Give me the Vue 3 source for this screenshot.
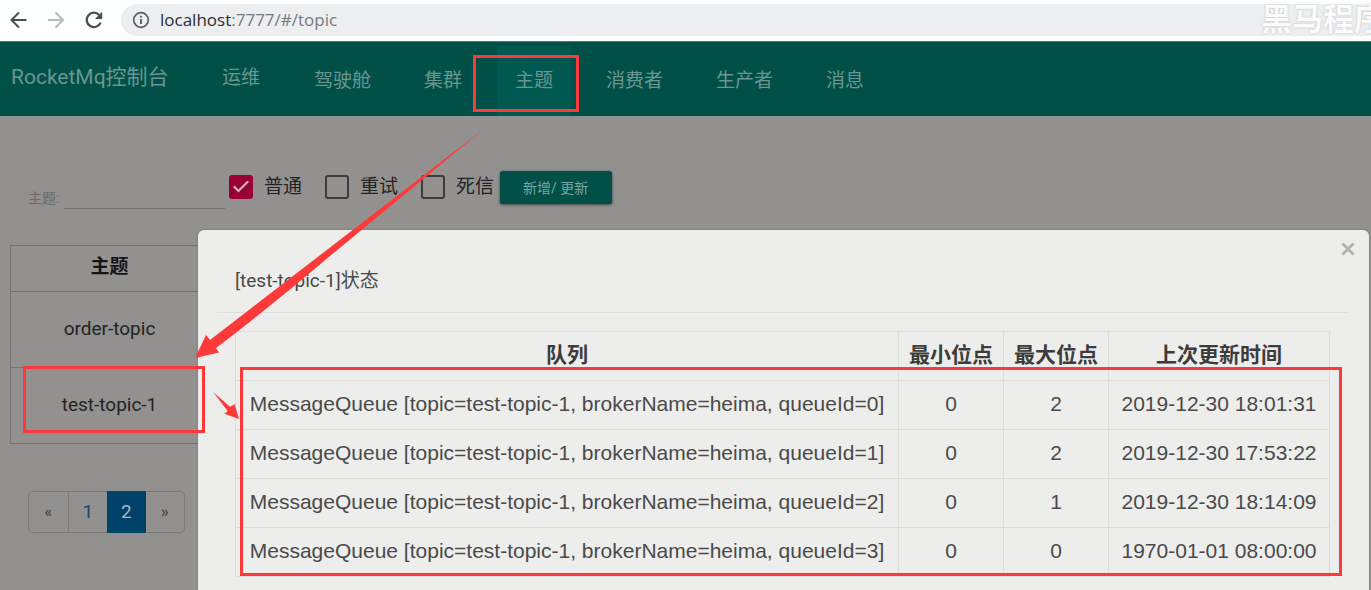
<script setup>
import { ref } from 'vue'

const navItems = ['驾驶舱', '集群', '主题', '消费者', '生产者', '消息']
const activeNav = ref('主题')

const keyword = ref('')
const filters = ref([
  { id: 'normal', label: '普通', checked: true },
  { id: 'retry', label: '重试', checked: false },
  { id: 'dead', label: '死信', checked: false },
])

const topics = ['order-topic', 'test-topic-1']
const pages = ['«', '1', '2', '»']
const currentPage = ref('2')

const queues = [
  { id: 0, min: 0, max: 2, updated: '2019-12-30 18:01:31' },
  { id: 1, min: 0, max: 2, updated: '2019-12-30 17:53:22' },
  { id: 2, min: 0, max: 1, updated: '2019-12-30 18:14:09' },
  { id: 3, min: 0, max: 0, updated: '1970-01-01 08:00:00' },
]
</script>

<template>
  <div class="page">
    <div class="browser">
      <button class="tool" aria-label="后退">
        <svg width="20" height="20" viewBox="0 0 20 20" fill="none" stroke="#4c4e50" stroke-width="2">
          <path d="M18.500 10H4M11 2.500L3.500 10l7.500 7.500" />
        </svg>
      </button>
      <button class="tool" aria-label="前进">
        <svg width="20" height="20" viewBox="0 0 20 20" fill="none" stroke="#b9babb" stroke-width="2">
          <path d="M2 10h15M9.500 2.500L17 10l-7.500 7.500" />
        </svg>
      </button>
      <button class="tool" aria-label="刷新">
        <svg width="20" height="20" viewBox="0 0 20 20">
          <path d="M16.600 12.600A7.200 7.200 0 1 1 15.400 5.200" fill="none" stroke="#4c4e50" stroke-width="2.300" />
          <path d="M18.200 1.800V9H11z" fill="#4c4e50" />
        </svg>
      </button>
      <div class="address">
        <svg width="18" height="18" viewBox="0 0 18 18" aria-hidden="true">
          <circle cx="9" cy="9" r="7.300" fill="none" stroke="#5b5d60" stroke-width="1.700" />
          <path d="M9 8v5M9 4.700v1.800" stroke="#5b5d60" stroke-width="1.900" />
        </svg>
        <span class="url"><span class="host">localhost</span>:7777/#/topic</span>
      </div>
      <div class="watermark">黑马程序</div>
    </div>

    <header class="navbar">
      <a class="brand" href="#">RocketMq控制台</a>
      <a class="ops" href="#">运维</a>
      <nav class="nav">
        <a
          v-for="item in navItems"
          :key="item"
          href="#"
          :class="{ active: item === activeNav }"
          @click.prevent="activeNav = item"
        >{{ item }}</a>
      </nav>
    </header>

    <main class="content">
      <form class="filters" @submit.prevent>
        <div class="field">
          <label for="keyword">主题:</label>
          <input id="keyword" v-model="keyword" type="text" />
        </div>
        <div class="checks">
          <label v-for="f in filters" :key="f.id" class="check" :for="f.id">
            <input :id="f.id" v-model="f.checked" type="checkbox" />
            <span>{{ f.label }}</span>
          </label>
        </div>
        <button class="update" type="button">新增/ 更新</button>
      </form>

      <table class="topics">
        <thead>
          <tr><th>主题</th><th></th></tr>
        </thead>
        <tbody>
          <tr v-for="t in topics" :key="t"><td>{{ t }}</td><td></td></tr>
        </tbody>
      </table>

      <div class="pager">
        <button
          v-for="p in pages"
          :key="p"
          type="button"
          :class="{ current: p === currentPage, arrow: p === '«' || p === '»' }"
        >{{ p }}</button>
      </div>
    </main>

    <section class="modal" role="dialog" aria-labelledby="modal-title">
      <button class="close" type="button" aria-label="关闭">
        <svg width="14" height="14" viewBox="0 0 14 14" stroke="#b0b0af" stroke-width="2.800">
          <path d="M1.500 1.500l11 11M12.500 1.500l-11 11" />
        </svg>
      </button>
      <h2 id="modal-title">[test-topic-1]状态</h2>
      <table class="queues">
        <colgroup>
          <col />
          <col class="offset" />
          <col class="offset" />
          <col class="time" />
        </colgroup>
        <thead>
          <tr><th>队列</th><th>最小位点</th><th>最大位点</th><th>上次更新时间</th></tr>
        </thead>
        <tbody>
          <tr v-for="q in queues" :key="q.id">
            <td>MessageQueue [topic=test-topic-1, brokerName=heima, queueId={{ q.id }}]</td>
            <td>{{ q.min }}</td>
            <td>{{ q.max }}</td>
            <td>{{ q.updated }}</td>
          </tr>
        </tbody>
      </table>
    </section>

    <svg class="marks" width="1371" height="590" viewBox="0 0 1371 590" aria-hidden="true">
      <g fill="none" stroke="#fd3a39" stroke-width="3">
        <rect x="474.500" y="56.500" width="103" height="54" />
        <rect x="24.500" y="367.500" width="179" height="64" />
        <rect x="241.500" y="368.500" width="1099" height="206" />
      </g>
      <g fill="#fd3a39">
        <path d="M485 128L210 340L206 335L195 358L219 352.500L216 348Q275 303 330 256Z" />
        <path d="M213 392L230 406.700L234.700 404.300L239 419L224.300 413.700L227.700 411Z" />
      </g>
    </svg>
  </div>
</template>

<style>
body {
  margin: 0;
  background: #929190;
}
</style>

<style scoped>
.page {
  position: relative;
  height: 100vh;
  overflow: hidden;
  background: #929190;
  color: #222;
  font-family: Roboto, "Noto Sans CJK SC", sans-serif;
  font-size: 19px;
}

.page * {
  box-sizing: border-box;
}

button {
  padding: 0;
  border: 0;
  background: none;
  font-family: inherit;
}

a {
  color: inherit;
  text-decoration: none;
}

/* Browser bar */
.browser {
  position: relative;
  display: flex;
  align-items: center;
  height: 41px;
  padding: 0 0 2px 8px;
  gap: 17px;
  background: #fdfefe;
}

.tool {
  display: flex;
  width: 20px;
  height: 20px;
}

.tool + .tool {
  margin-left: 1px;
}

.address {
  display: flex;
  flex: 1;
  align-items: center;
  gap: 10px;
  height: 32px;
  padding-left: 11px;
  border-radius: 16px 0 0 16px;
  background: #eceef0;
}

.url {
  color: #76797c;
  font-family: "Open Sans", sans-serif;
  font-size: 17px;
  line-height: 24px;
}

.host {
  color: #2b2d30;
}

.watermark {
  position: absolute;
  top: 0;
  right: 0;
  width: 110px;
  overflow: hidden;
  color: #fbfbfb;
  font-size: 31px;
  font-weight: 700;
  line-height: 40px;
  text-shadow: 0 0 2px #b8babc;
  white-space: nowrap;
}

/* Navigation */
.navbar {
  display: flex;
  align-items: flex-start;
  height: 75px;
  padding-left: 11px;
  border-top: 1px solid #2f8981;
  background: #005048;
  color: #6a9691;
  font-size: 19px;
}

.brand {
  width: 211px;
  font-size: 21px;
  line-height: 70px;
}

.ops {
  width: 74px;
  line-height: 72px;
}

.nav {
  display: flex;
  gap: 17px;
  padding-top: 4px;
}

.nav a {
  padding: 0 18px;
  border-radius: 3px 3px 0 0;
  line-height: 70px;
}

.nav .active {
  background: #005951;
}

/* Topic filters */
.content {
  padding: 55px 10px 0;
}

.filters {
  display: flex;
  align-items: flex-start;
}

.field {
  display: flex;
  align-items: flex-end;
  gap: 5px;
  height: 38px;
  padding-left: 18px;
}

.field label {
  width: 31px;
  color: #6b6b6a;
  font-size: 14px;
  line-height: 22px;
  white-space: nowrap;
}

.field input {
  width: 161px;
  height: 30px;
  padding: 0;
  border: 0;
  border-bottom: 1px solid #737372;
  border-radius: 0;
  outline: 0;
  background: transparent;
  font: inherit;
}

.checks {
  display: flex;
  gap: 23px;
  padding: 3px 6px 0 4px;
}

.check {
  display: flex;
  align-items: center;
  gap: 11px;
  height: 25px;
  font-size: 19px;
  line-height: 24px;
}

.check input {
  display: grid;
  width: 24px;
  height: 24px;
  margin: 0;
  border: 2px solid #3b3b3b;
  border-radius: 3px;
  appearance: none;
  place-items: center;
}

.check input:checked {
  border-color: #980036;
  background: #980036;
}

.check input:checked::before {
  width: 16px;
  height: 12px;
  background: #d3b3bd;
  clip-path: polygon(0 55%, 10% 42%, 34% 75%, 90% 0, 100% 12%, 34% 100%);
  content: "";
}

.update {
  height: 33px;
  padding: 0 24px 2px 23px;
  border-radius: 3px;
  background: #005048;
  box-shadow: 0 1px 3px #444, 0 0 1px #008a7d;
  color: #78a5a1;
  font-size: 14px;
}

/* Topic list */
.topics {
  width: 100%;
  margin-top: 36px;
  border-collapse: collapse;
  table-layout: fixed;
  color: #232323;
  text-align: center;
}

.topics th,
.topics td {
  height: 76px;
  padding: 0 0 2px;
  border: 1px solid #747473;
}

.topics th {
  height: 46px;
  padding-bottom: 4px;
  color: #151515;
  line-height: 24px;
}

.topics th:first-child {
  width: 198px;
}

.pager {
  display: flex;
  width: 157px;
  height: 42px;
  margin: 47px 0 0 18px;
  border: 1px solid #7b7b7a;
  border-radius: 5px;
}

.pager button {
  flex: 1;
  padding-bottom: 2px;
  color: #124a70;
  font-size: 19px;
}

.pager .arrow {
  color: #3b4349;
  font-size: 17px;
}

.pager button:first-child {
  border-right: 1px solid #7b7b7a;
}

.pager .current {
  margin: -1px 0;
  background: #00426a;
  color: #a9b8c2;
}

/* Status dialog */
.modal {
  position: absolute;
  top: 230px;
  right: 2px;
  bottom: -40px;
  left: 198px;
  padding: 32px 20px 0 19px;
  border-radius: 6px;
  background: #ededeb;
  box-shadow: 0 0 2px #666;
  color: #4a4a4a;
}

.modal h2 {
  margin: 0 0 18px;
  padding: 0 18px 12px;
  border-bottom: 1px solid #e0e0de;
  font-size: 19px;
  font-weight: 400;
  line-height: 38px;
}

.close {
  position: absolute;
  top: 12px;
  right: 14px;
  display: flex;
}

.queues {
  width: calc(100% - 37px);
  margin-left: 18px;
  border-collapse: collapse;
  table-layout: fixed;
  font-family: "Liberation Sans", "Noto Sans CJK SC", sans-serif;
  font-size: 21px;
  text-align: center;
}

.queues .offset {
  width: 105px;
}

.queues .time {
  width: 221px;
}

.queues th,
.queues td {
  height: 49px;
  padding: 0 0 2px;
  border: 1px solid #dcdcda;
  line-height: 30px;
  white-space: nowrap;
}

.queues th {
  color: #3c3c3c;
}

/* Red guide marks over the page */
.marks {
  position: absolute;
  top: 0;
  left: 0;
  pointer-events: none;
}
</style>
